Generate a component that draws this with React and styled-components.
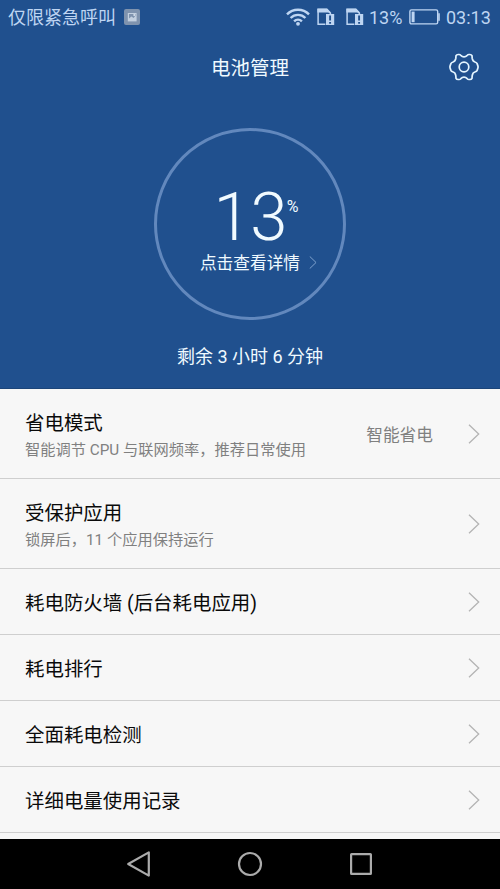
import React from 'react';
import styled, { createGlobalStyle } from 'styled-components';

const rows = [
  {
    title: '省电模式',
    detail: '智能调节 CPU 与联网频率，推荐日常使用',
    value: '智能省电',
  },
  { title: '受保护应用', detail: '锁屏后，11 个应用保持运行' },
  { title: '耗电防火墙 (后台耗电应用)' },
  { title: '耗电排行' },
  { title: '全面耗电检测' },
  { title: '详细电量使用记录' },
];

const PictureIcon = () => (
  <svg width="16" height="16" viewBox="0 0 16 16">
    <rect width="16" height="16" rx="2" fill="#7f93ae" />
    <rect x="3.8" y="4" width="8.8" height="8.4" fill="#c3d0e0" />
    <path d="M5 5h6.4v1.8L9.6 9 7.4 7.4 5 9.4z" fill="#7f93ae" />
    <circle cx="10.2" cy="6" r="0.9" fill="#dde6f0" />
  </svg>
);

const WifiIcon = () => (
  <svg width="24" height="18" viewBox="0 0 24 18" fill="none">
    <g stroke="#bed5f2" strokeWidth="2.4">
      <path d="M1 6.4a15.4 15.4 0 0 1 22 0" />
      <path d="M4.6 10a10.4 10.4 0 0 1 14.8 0" />
      <path d="M8.1 13.4a5.6 5.6 0 0 1 7.8 0" />
    </g>
    <circle cx="12" cy="15.8" r="1.9" fill="#bed5f2" />
  </svg>
);

const SimIcon = () => (
  <svg width="18" height="18" viewBox="0 0 18 18">
    <path
      d="M8.4 16.2H1.1V1.4h8.6l3.7 3.7V7"
      fill="none"
      stroke="#bed5f2"
      strokeWidth="1.5"
    />
    <path d="M.4.4h9.8l3.8 4H.4z" fill="#bed5f2" />
    <rect x="9" y="6" width="8.2" height="11" fill="#bed5f2" />
    <path d="M13.1 7.4v5.2M13.1 14v1.8" stroke="#20508e" strokeWidth="1.9" />
  </svg>
);

const BatteryIcon = () => (
  <svg width="32" height="18" viewBox="0 0 32 18">
    <rect
      x="0.9"
      y="1.9"
      width="27.8"
      height="14"
      rx="1.6"
      fill="none"
      stroke="#bed5f2"
      strokeWidth="1.4"
    />
    <rect x="2.6" y="3.6" width="3" height="10.6" fill="#bed5f2" />
    <path d="M30 5.2v7.6" stroke="#bed5f2" strokeWidth="1.6" />
  </svg>
);

const GearIcon = () => (
  <svg width="30" height="28" viewBox="-15 -14 30 28" fill="none">
    <g stroke="#e4f5ff" strokeWidth="1.7" strokeLinejoin="round">
      <path d="M-8 -11.3Q-7.4 -12.5 -5.9 -12.5H-4.9Q-3.9 -12.5 -3.2 -11.7Q-1.8 -10.2 0 -10.2T3.2 -11.7Q3.9 -12.5 4.9 -12.5H5.9Q7.4 -12.5 8 -11.3L8.2 -8.6Q8.6 -5.6 11.4 -4.8Q12.6 -4.5 13.1 -3.4L13.8 -1.4Q14.3 0 13.8 1.4L13.1 3.4Q12.6 4.5 11.4 4.8Q8.6 5.6 8.2 8.6L8 11.3Q7.4 12.5 5.9 12.5H4.9Q3.9 12.5 3.2 11.7Q1.8 10.2 0 10.2T-3.2 11.7Q-3.9 12.5 -4.9 12.5H-5.9Q-7.4 12.5 -8 11.3L-8.2 8.6Q-8.6 5.6 -11.4 4.8Q-12.6 4.5 -13.1 3.4L-13.8 1.4Q-14.3 0 -13.8 -1.4L-13.1 -3.4Q-12.6 -4.5 -11.4 -4.8Q-8.6 -5.6 -8.2 -8.6Z" />
      <circle r="4.8" />
    </g>
  </svg>
);

const Chevron = ({ width, height, color }) => (
  <svg width={width} height={height} viewBox="0 0 12 20" fill="none">
    <path d="M1 .7 10.7 10 1 19.3" stroke={color} strokeWidth="1.3" />
  </svg>
);

const App = () => (
  <>
    <GlobalStyle />
    <Screen>
      <Header>
        <StatusBar>
          <Carrier>仅限紧急呼叫</Carrier>
          <PictureIcon />
          <StatusIcons>
            <WifiIcon />
            <SimIcon />
            <SimIcon />
            <StatusText $width="35px">13%</StatusText>
            <BatteryIcon />
            <StatusText $width="45px">03:13</StatusText>
          </StatusIcons>
        </StatusBar>
        <TitleBar>
          <PageTitle>电池管理</PageTitle>
          <GearIcon />
        </TitleBar>
        <Gauge>
          <Level>
            <Digits>13</Digits>
            <Percent>%</Percent>
          </Level>
          <DetailLink>
            点击查看详情
            <Chevron width={8} height={13} color="#8fb0d8" />
          </DetailLink>
        </Gauge>
        <Remaining>剩余 3 小时 6 分钟</Remaining>
      </Header>
      <List>
        {rows.map(({ title, detail, value }) => (
          <Row key={title} $tall={Boolean(detail)}>
            <RowText>
              <RowTitle>{title}</RowTitle>
              {detail && <RowDetail>{detail}</RowDetail>}
            </RowText>
            {value && <RowValue>{value}</RowValue>}
            <Chevron width={12} height={20} color="#b4b4b4" />
          </Row>
        ))}
      </List>
      <NavBar>
        <svg width="26" height="28" viewBox="0 0 26 28" fill="none">
          <path
            d="M2.2 14 22.8 2.4v23.2z"
            stroke="#ababab"
            strokeWidth="2.2"
            strokeLinejoin="round"
          />
        </svg>
        <svg width="26" height="26" viewBox="0 0 26 26" fill="none">
          <circle cx="13" cy="13" r="11" stroke="#ababab" strokeWidth="2.2" />
        </svg>
        <svg width="26" height="26" viewBox="0 0 26 26" fill="none">
          <rect
            x="3.1"
            y="3.1"
            width="19.8"
            height="19.8"
            rx="0.5"
            stroke="#ababab"
            strokeWidth="2.2"
          />
        </svg>
      </NavBar>
    </Screen>
  </>
);

export default App;

const GlobalStyle = createGlobalStyle`
  * {
    box-sizing: border-box;
  }

  body {
    margin: 0;
    font-family: Roboto, 'Noto Sans CJK SC', sans-serif;
  }

  svg {
    display: block;
    flex-shrink: 0;
  }
`;

const Screen = styled.div`
  display: flex;
  flex-direction: column;
  width: 500px;
  height: 889px;
  overflow: hidden;
  background: #f7f7f7;
`;

const Header = styled.header`
  display: flex;
  flex-direction: column;
  align-items: center;
  height: 389px;
  flex-shrink: 0;
  color: #f0faff;
  background: #20508e;
  border-bottom: 1px solid #1c4579;
`;

const StatusBar = styled.div`
  display: flex;
  align-items: center;
  gap: 8px;
  width: 100%;
  height: 34px;
  padding: 0 9px 0 8px;
  color: #bed5f2;
`;

const Carrier = styled.span`
  padding-top: 2px;
  font-size: 18px;
  line-height: 32px;
  white-space: nowrap;
`;

const StatusIcons = styled.div`
  display: flex;
  align-items: center;
  margin-left: auto;
  gap: 5px;

  svg + svg {
    margin-left: 2px;
  }

  svg + svg + svg {
    margin-left: 6px;
  }
`;

const StatusText = styled.span`
  width: ${({ $width }) => $width};
  padding-top: 1px;
  font-size: 18px;
  line-height: 33px;
  white-space: nowrap;
`;

const TitleBar = styled.div`
  display: grid;
  grid-template-columns: 1fr auto 1fr;
  align-items: center;
  width: 100%;
  height: 66px;
  padding: 0 21px;

  svg {
    grid-column: 3;
    justify-self: end;
  }
`;

const PageTitle = styled.h1`
  grid-column: 2;
  margin: 0;
  padding-top: 4px;
  font-size: 19.5px;
  font-weight: 400;
  line-height: 28px;
`;

const Gauge = styled.div`
  display: flex;
  flex-direction: column;
  align-items: center;
  width: 192px;
  height: 192px;
  margin-top: 27.5px;
  padding-top: 54px;
  border: 3px solid #6288bd;
  border-radius: 50%;
`;

const Level = styled.div`
  display: flex;
  align-items: flex-start;
  height: 66px;
  padding-left: 12px;
`;

const Digits = styled.span`
  font-size: 67px;
  font-weight: 300;
  line-height: 64px;
  letter-spacing: -0.5px;
`;

const Percent = styled.span`
  margin-top: 12px;
  font-size: 16px;
  font-weight: 400;
  line-height: 20px;
`;

const DetailLink = styled.div`
  display: flex;
  align-items: center;
  gap: 9px;
  padding-left: 17px;
  font-size: 16.7px;
  line-height: 26px;
  white-space: nowrap;

  svg {
    margin-bottom: 2px;
  }
`;

const Remaining = styled.div`
  margin-top: 23.5px;
  font-size: 18px;
  line-height: 28px;
`;

const List = styled.main`
  flex: 1;
  overflow: hidden;
`;

const Row = styled.div`
  display: flex;
  align-items: center;
  height: ${({ $tall }) => ($tall ? '90px' : '66px')};
  padding: 0 20px 0 25px;
  border-bottom: 1px solid #cfcfcf;
`;

const RowText = styled.div`
  flex: 1;
  padding-top: 4px;
  white-space: nowrap;
`;

const RowTitle = styled.div`
  color: #0a0a0a;
  font-size: 19.45px;
  line-height: 28px;
`;

const RowDetail = styled.div`
  color: #808080;
  font-size: 15.25px;
  line-height: 24px;
`;

const RowValue = styled.div`
  margin-right: 35px;
  padding-top: 4px;
  color: #808080;
  font-size: 16.7px;
  line-height: 26px;
`;

const NavBar = styled.nav`
  display: flex;
  align-items: center;
  justify-content: center;
  gap: 85px;
  height: 50px;
  flex-shrink: 0;
  background: #000;
`;
